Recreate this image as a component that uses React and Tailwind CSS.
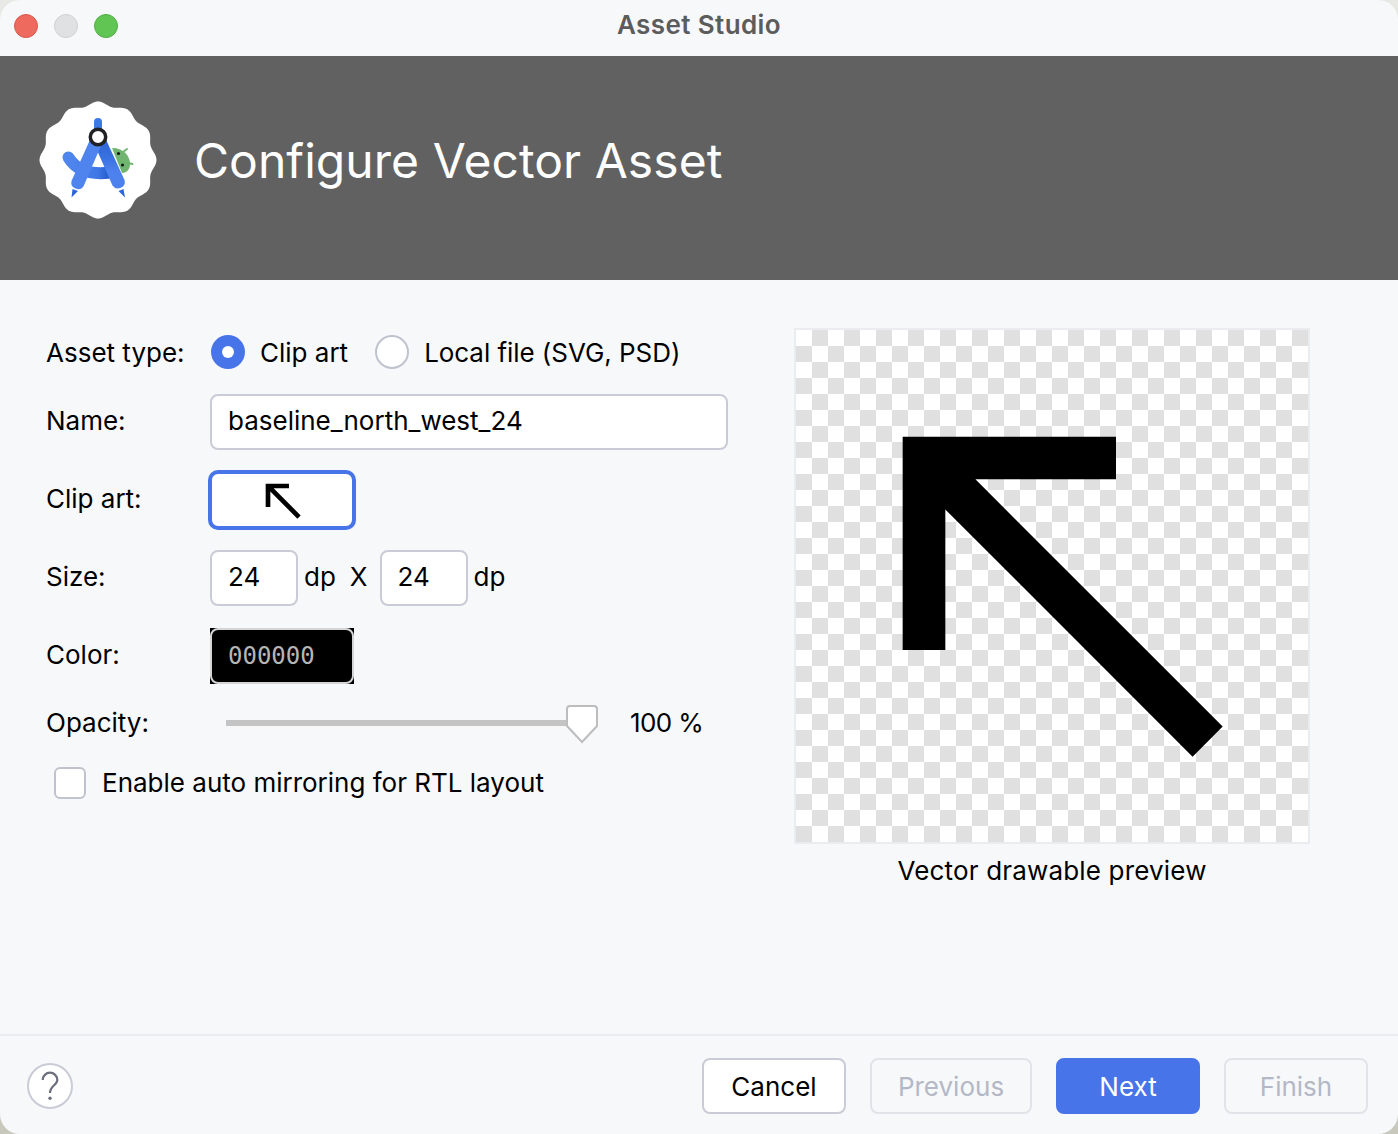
function scallopPath(cx, cy, r, amp, bumps) {
  const pts = [];
  for (let i = 0; i < 240; i++) {
    const t = (i / 240) * Math.PI * 2;
    const rad = r + amp * Math.cos(bumps * t);
    pts.push(`${(cx + rad * Math.sin(t)).toFixed(2)},${(cy - rad * Math.cos(t)).toFixed(2)}`);
  }
  return `M${pts.join('L')}Z`;
}

function StudioLogo() {
  return (
    <svg width="124" height="124" viewBox="36 98 124 124" className="shrink-0">
      <defs>
        <linearGradient id="arc" x1="0" x2="1" y1="0" y2="0">
          <stop offset="0" stopColor="#4f86ee" />
          <stop offset="0.7" stopColor="#3f78e6" />
          <stop offset="1" stopColor="#2358c8" />
        </linearGradient>
        <linearGradient id="rightLeg" x1="0" x2="0" y1="0" y2="1">
          <stop offset="0" stopColor="#2a5fd2" />
          <stop offset="0.45" stopColor="#3a72e2" />
          <stop offset="0.7" stopColor="#4d82ee" />
          <stop offset="1" stopColor="#4d82ee" />
        </linearGradient>
      </defs>
      <path d={scallopPath(98, 160, 56.5, 2, 12)} fill="#fff" />
      {/* android peeking out */}
      <path d="M112 148 C124 148 130 156 130 164 C130 170 126 173 122 173 Z" fill="#6fb56f" />
      <path d="M123 152 L127 149 M128 163 L132.5 164" stroke="#6fb56f" strokeWidth="2" strokeLinecap="round" />
      <circle cx="118.5" cy="153.5" r="1.5" fill="#111" />
      <circle cx="122.5" cy="165" r="1.5" fill="#111" />
      {/* arc */}
      <path d="M68.5 157.5 C76 170 90 175 110 172.5" stroke="url(#arc)" strokeWidth="12" fill="none" strokeLinecap="round" />
      {/* needles */}
      <path d="M72.5 189 L78 191 L71.5 197.5 Z" fill="#2f66d8" />
      <path d="M118.5 191 L123.5 189 L125 197.5 Z" fill="#2f66d8" />
      {/* legs */}
      <path d="M98 118 a4 4 0 0 1 4 4 V134 H94 V122 a4 4 0 0 1 4 -4 Z" fill="#3f78e6" />
      <path d="M103 133 L124.5 180 a6.7 6.7 0 0 1 -12 5.5 L93 141 Z" fill="url(#rightLeg)" />
      <path d="M93 133 L71.5 181 a6.7 6.7 0 0 0 12.2 5 L103 141 Z" fill="#4f84ee" />
      <circle cx="98" cy="137" r="7.7" fill="#fff" stroke="#202124" strokeWidth="3.5" />
    </svg>
  );
}

function NorthWest({ className }) {
  return (
    <svg viewBox="0 0 24 24" className={className} fill="#000">
      <path d="M5 15h2V8.41L18.59 20 20 18.59 8.41 7H15V5H5v10z" />
    </svg>
  );
}

function HelpIcon() {
  return (
    <svg width="46" height="46" viewBox="0 0 46 46" className="shrink-0">
      <circle cx="23" cy="23" r="22" fill="#fff" stroke="#c9ccd6" strokeWidth="2" />
      <path d="M15.7 17 C15.7 13 19 9.7 23 9.7 C27 9.7 30.3 13 30.3 17 C30.3 22 23 23 23 30" fill="none" stroke="#6c707e" strokeWidth="2.2" />
      <circle cx="23" cy="35.3" r="1.7" fill="#6c707e" />
    </svg>
  );
}

function Label({ children, className = 'pb-1' }) {
  return <div className={`w-[164px] shrink-0 text-[26px] text-black ${className}`}>{children}</div>;
}

function FooterButton({ children, tone }) {
  const tones = {
    plain: 'bg-white border-[#c9ccd6] text-black',
    off: 'bg-transparent border-[#e1e3e8] text-[#b4b8c6]',
    primary: 'bg-[#4774e8] border-[#4774e8] text-white',
  };
  return (
    <button className={`h-14 rounded-lg border-2 text-[26px] flex items-center justify-center ${tones[tone]} ${children === 'Previous' ? 'w-[162px]' : 'w-[144px]'}`}>
      {children}
    </button>
  );
}

export default function App() {
  return (
    <div className="w-[1398px] h-[1134px] bg-linear-to-b from-[#e8e8e4] to-[#c9c8bd] overflow-hidden font-['Inter',sans-serif] text-black">
      <div className="w-full h-full bg-[#f7f8fa] rounded-[20px] overflow-hidden flex flex-col">
        {/* Title bar */}
        <div className="h-14 relative flex items-center justify-center shrink-0 pb-2">
          <div className="absolute left-[14px] top-[14px] flex gap-4">
            <span className="w-6 h-6 rounded-full bg-[#ee6a5f] border border-[#d8574c]" />
            <span className="w-6 h-6 rounded-full bg-[#e0e1e2] border border-[#cfd0d1]" />
            <span className="w-6 h-6 rounded-full bg-[#61c554] border border-[#52ad46]" />
          </div>
          <div className="text-[26px] font-semibold text-[#5c5c5c] tracking-[0.4px]">Asset Studio</div>
        </div>

        {/* Header */}
        <div className="h-[224px] bg-[#616161] flex items-center pl-9 pb-4 shrink-0">
          <StudioLogo />
          <h1 className="ml-[34px] pt-[2px] text-[48px] text-white font-normal tracking-[0.05px]">Configure Vector Asset</h1>
        </div>

        {/* Body */}
        <div className="flex-1 flex items-start">
          <div className="w-[748px] pl-[46px] shrink-0 flex flex-col">
            <div className="mt-[54px] h-9 flex items-center">
              <Label className="">Asset type:</Label>
              <span className="w-[34px] h-[34px] ml-[1px] rounded-full bg-[#4774e8] flex items-center justify-center">
                <span className="w-3 h-3 rounded-full bg-white" />
              </span>
              <span className="ml-[15px] text-[26px]">Clip art</span>
              <span className="w-[34px] h-[34px] ml-[27px] rounded-full bg-white border-2 border-[#c0c3ce]" />
              <span className="ml-[15px] text-[26px] tracking-[-0.05px]">Local file (SVG, PSD)</span>
            </div>

            <div className="mt-6 flex items-center">
              <Label>Name:</Label>
              <div className="w-[518px] h-14 rounded-lg bg-white border-2 border-[#c9ccd6] flex items-center pl-4 pb-1 text-[26px]">
                baseline_north_west_24
              </div>
            </div>

            <div className="mt-5 flex items-center">
              <Label>Clip art:</Label>
              <div className="-ml-[2px] w-[148px] h-[60px] rounded-[10px] bg-white border-4 border-[#4774e8] flex items-center justify-center">
                <NorthWest className="w-14 h-14" />
              </div>
            </div>

            <div className="mt-5 flex items-center text-[26px]">
              <Label>Size:</Label>
              <div className="w-[88px] h-14 rounded-lg bg-white border-2 border-[#c9ccd6] flex items-center pl-4 pb-1">24</div>
              <span className="ml-[6px] pb-1">dp</span>
              <span className="ml-[14px] pb-1">X</span>
              <div className="ml-[12px] w-[88px] h-14 rounded-lg bg-white border-2 border-[#c9ccd6] flex items-center pl-4 pb-1">24</div>
              <span className="ml-[6px] pb-1">dp</span>
            </div>

            <div className="mt-[22px] flex items-center">
              <Label>Color:</Label>
              <div className="relative w-[144px] h-14 bg-black">
                <div className="w-full h-full rounded-lg border-2 border-[#d5d5d5] flex items-center pl-4 font-['DejaVu_Sans_Mono',monospace] text-[24px] text-[#b5b5b5]">
                  000000
                </div>
              </div>
            </div>

            <div className="mt-5 h-[38px] flex items-center">
              <Label className="pb-[2px]">Opacity:</Label>
              <div className="ml-4 w-[340px] h-[6px] bg-[#c4c4c4]" />
              <svg width="32" height="40" viewBox="0 0 32 40" className="shrink-0 mt-[4px]">
                <path d="M4 1 H28 a3 3 0 0 1 3 3 V21 L16 37 L1 21 V4 a3 3 0 0 1 3 -3 Z" fill="#fff" stroke="#bdbdbd" strokeWidth="2" />
              </svg>
              <span className="ml-8 pb-[2px] text-[26px] whitespace-nowrap tracking-[-0.6px]">100 %</span>
            </div>

            <div className="mt-[21px] flex items-center">
              <span className="ml-2 w-8 h-8 rounded-md bg-white border-2 border-[#c0c3ce]" />
              <span className="ml-4 text-[26px]">Enable auto mirroring for RTL layout</span>
            </div>
          </div>

          {/* Preview */}
          <div className="ml-[46px] mt-12 flex flex-col items-center">
            <div className="w-[516px] h-[516px] border-2 border-[#ebecf0] bg-[repeating-conic-gradient(#e0e0e0_0_25%,#ffffff_0_50%)] bg-[length:32px_32px]">
              <NorthWest className="w-full h-full" />
            </div>
            <div className="mt-[7px] text-[26px] tracking-[0.17px]">Vector drawable preview</div>
          </div>
        </div>

        {/* Footer */}
        <div className="h-[100px] shrink-0 border-t-2 border-[#ebecf0] flex items-center pl-[27px] pr-[30px] pt-[2px]">
          <HelpIcon />
          <div className="ml-auto flex gap-6">
            <FooterButton tone="plain">Cancel</FooterButton>
            <FooterButton tone="off">Previous</FooterButton>
            <FooterButton tone="primary">Next</FooterButton>
            <FooterButton tone="off">Finish</FooterButton>
          </div>
        </div>
      </div>
    </div>
  );
}
